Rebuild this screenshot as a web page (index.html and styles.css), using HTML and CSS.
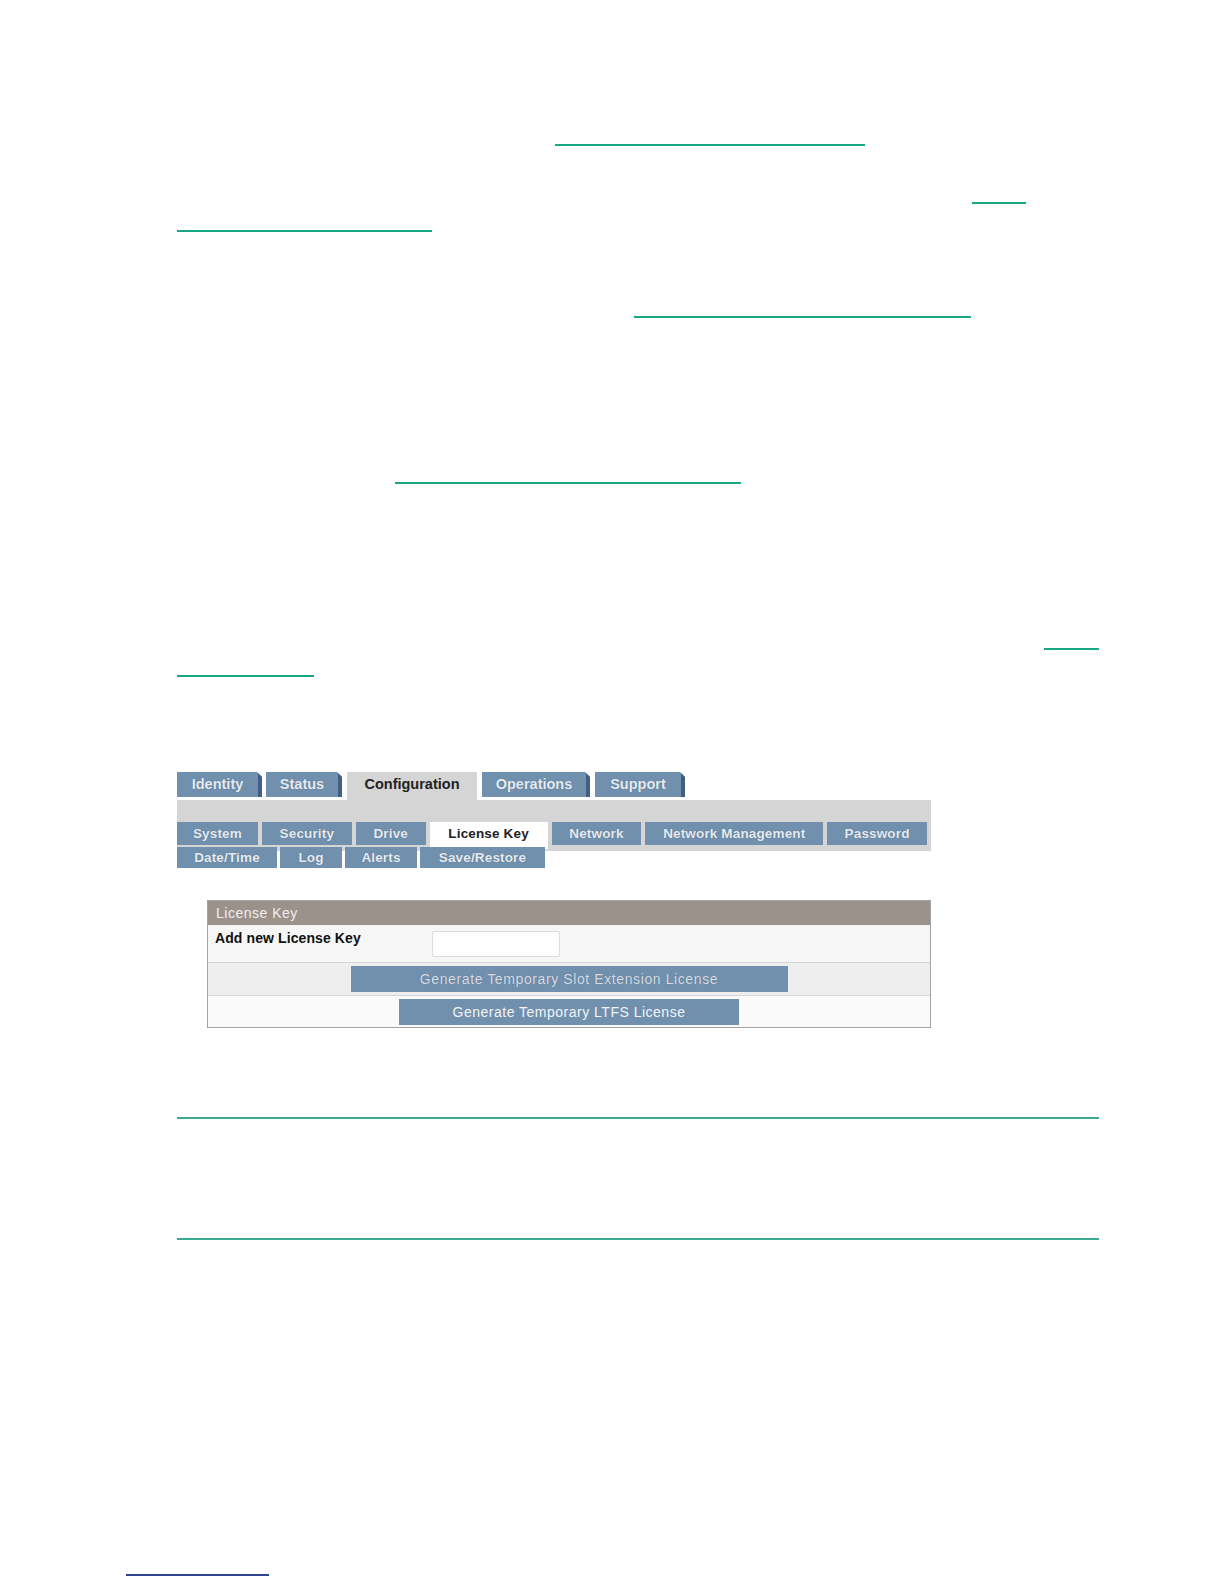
FILE: index.html
```html
<!DOCTYPE html>
<html>
<head>
<meta charset="utf-8">
<link rel="stylesheet" href="styles.css">
</head>
<body>
<div class="page">
  <div class="doc">
    <div class="line l1"><span class="link w1"></span></div>
    <div class="line l2"><span class="link w2"></span></div>
    <div class="line l3"><span class="link w3"></span></div>
    <div class="line l4"><span class="link w4"></span></div>
    <div class="line l5"><span class="link w5"></span></div>
    <div class="line l6"><span class="link w6"></span></div>
    <div class="line l7"><span class="link w7"></span></div>

    <div class="shot">
      <div class="tabs">
        <div class="tab t-identity">Identity</div>
        <div class="tab t-status">Status</div>
        <div class="tab active t-config">Configuration</div>
        <div class="tab t-ops">Operations</div>
        <div class="tab t-support">Support</div>
      </div>
      <div class="subbar">
        <div class="subrow">
          <div class="sub s-system">System</div>
          <div class="sub s-security">Security</div>
          <div class="sub s-drive">Drive</div>
          <div class="sub active s-license">License Key</div>
          <div class="sub s-network">Network</div>
          <div class="sub s-netman">Network Management</div>
          <div class="sub s-password">Password</div>
        </div>
      </div>
      <div class="subrow row2">
        <div class="sub s-date">Date/Time</div>
        <div class="sub s-log">Log</div>
        <div class="sub s-alerts">Alerts</div>
        <div class="sub s-save">Save/Restore</div>
      </div>

      <div class="panel">
        <div class="panel-head">License Key</div>
        <div class="prow first">
          <div class="plabel">Add new License Key</div>
          <div class="pinput"></div>
        </div>
        <div class="prow second">
          <div class="btn disabled">Generate Temporary Slot Extension License</div>
        </div>
        <div class="prow third">
          <div class="btn">Generate Temporary LTFS License</div>
        </div>
      </div>
    </div>

    <div class="rule r1"></div>
    <div class="rule r2"></div>
  </div>
  <div class="footlink"></div>
</div>
</body>
</html>
```

FILE: styles.css
```css
html, body {
  margin: 0;
  padding: 0;
  background: #ffffff;
}
.page {
  width: 1224px;
  height: 1584px;
  position: relative;
  overflow: hidden;
  font-family: "Liberation Sans", Arial, sans-serif;
}
.doc {
  padding-left: 177px;
  width: 922px;
  padding-top: 1px;
}
.line {
  height: 2px;
  display: flex;
}
.link {
  display: block;
  height: 2px;
  background: #18a888;
}
.l1 { margin-top: 143px; }
.l2 { margin-top: 56px; }
.l3 { margin-top: 26px; }
.l4 { margin-top: 84px; }
.l5 { margin-top: 164px; }
.l6 { margin-top: 164px; }
.l7 { margin-top: 25px; }
.w1 { margin-left: 378px; width: 310px; }
.w2 { margin-left: 795px; width: 54px; }
.w3 { margin-left: 0; width: 255px; }
.w4 { margin-left: 457px; width: 337px; }
.w5 { margin-left: 218px; width: 346px; }
.w6 { margin-left: 867px; width: 55px; }
.w7 { margin-left: 0; width: 137px; }

/* screenshot */
.shot {
  margin-top: 95px;
  width: 754px;
}
.tabs {
  display: flex;
  align-items: flex-start;
  height: 28px;
}
.tab {
  box-sizing: border-box;
  height: 25px;
  margin-right: 5px;
  background: #7090ad;
  border-right: 4px solid #3f6084;
  color: #e6ebf1;
  font-weight: bold;
  font-size: 14.5px;
  line-height: 25px;
  text-align: center;
  clip-path: polygon(0 0, calc(100% - 5px) 0, 100% 5px, 100% 100%, 0 100%);
  text-shadow: 0 0 1px rgba(40,60,90,0.5);
}
.tab.active {
  height: 28px;
  background: #d5d5d5;
  border-right: none;
  color: #222222;
  clip-path: none;
  text-shadow: none;
}
.t-identity { width: 85px; margin-right: 4px; }
.t-status { width: 76px; }
.t-config { width: 130px; }
.t-ops { width: 108px; }
.t-support { width: 90px; }

.subbar {
  background: #d5d5d5;
  padding-top: 22px;
  padding-bottom: 6px;
}
.subrow {
  display: flex;
  height: 23px;
}
.row2 {
  margin-top: -4px;
  height: 21px;
}
.sub {
  box-sizing: border-box;
  background: #7090ad;
  color: #e6ebf1;
  font-weight: bold;
  font-size: 13.5px;
  letter-spacing: 0.15px;
  line-height: 23px;
  text-align: center;
  margin-right: 4px;
  text-shadow: 0 0 1px rgba(40,60,90,0.5);
}
.row2 .sub { line-height: 21px; margin-right: 3px; }
.sub.active {
  background: #ffffff;
  color: #222222;
  height: 27px;
  text-shadow: none;
}
.s-system { width: 81px; }
.s-security { width: 90px; }
.s-drive { width: 70px; }
.s-license { width: 118px; }
.s-network { width: 90px; }
.s-netman { width: 178px; }
.s-password { width: 100px; }
.s-date { width: 100px; }
.s-log { width: 62px; }
.s-alerts { width: 72px; }
.s-save { width: 125px; }

.panel {
  margin-top: 32px;
  margin-left: 30px;
  width: 724px;
  box-sizing: border-box;
  border: 1px solid #a3a3a3;
}
.panel-head {
  height: 24px;
  line-height: 24px;
  background: #9b928b;
  color: #f1efed;
  padding-left: 8px;
  font-size: 14px;
  letter-spacing: 0.5px;
}
.prow {
  display: flex;
  justify-content: center;
  align-items: center;
  box-sizing: border-box;
  border-top: 1px solid #d6d6d6;
}
.prow.first {
  justify-content: flex-start;
  align-items: flex-start;
  height: 37px;
  background: #f6f6f6;
  border-top: none;
}
.plabel {
  box-sizing: border-box;
  width: 224px;
  padding-left: 7px;
  padding-top: 5px;
  font-weight: bold;
  color: #111111;
  font-size: 14px;
  letter-spacing: 0.1px;
}
.pinput {
  margin-top: 6px;
  width: 128px;
  height: 26px;
  box-sizing: border-box;
  background: #ffffff;
  border: 1px solid #dcdcdc;
  border-radius: 2px;
}
.prow.second {
  height: 33px;
  background: #eeeeee;
}
.prow.third {
  height: 32px;
  background: #fafafa;
}
.btn {
  height: 26px;
  line-height: 26px;
  background: #7190ad;
  color: #f2f4f7;
  font-size: 14px;
  text-align: center;
  width: 340px;
  letter-spacing: 0.5px;
}
.btn.disabled {
  width: 437px;
  color: #d7dde4;
  letter-spacing: 0.6px;
  text-shadow: 0 0 1px rgba(60,80,110,0.6);
}

.rule {
  height: 2px;
  background: #3aaa92;
  width: 922px;
}
.r1 { margin-top: 89px; }
.r2 { margin-top: 119px; }

.footlink {
  position: absolute;
  left: 126px;
  top: 1574px;
  width: 143px;
  height: 2px;
  background: #2f4593;
}
```
